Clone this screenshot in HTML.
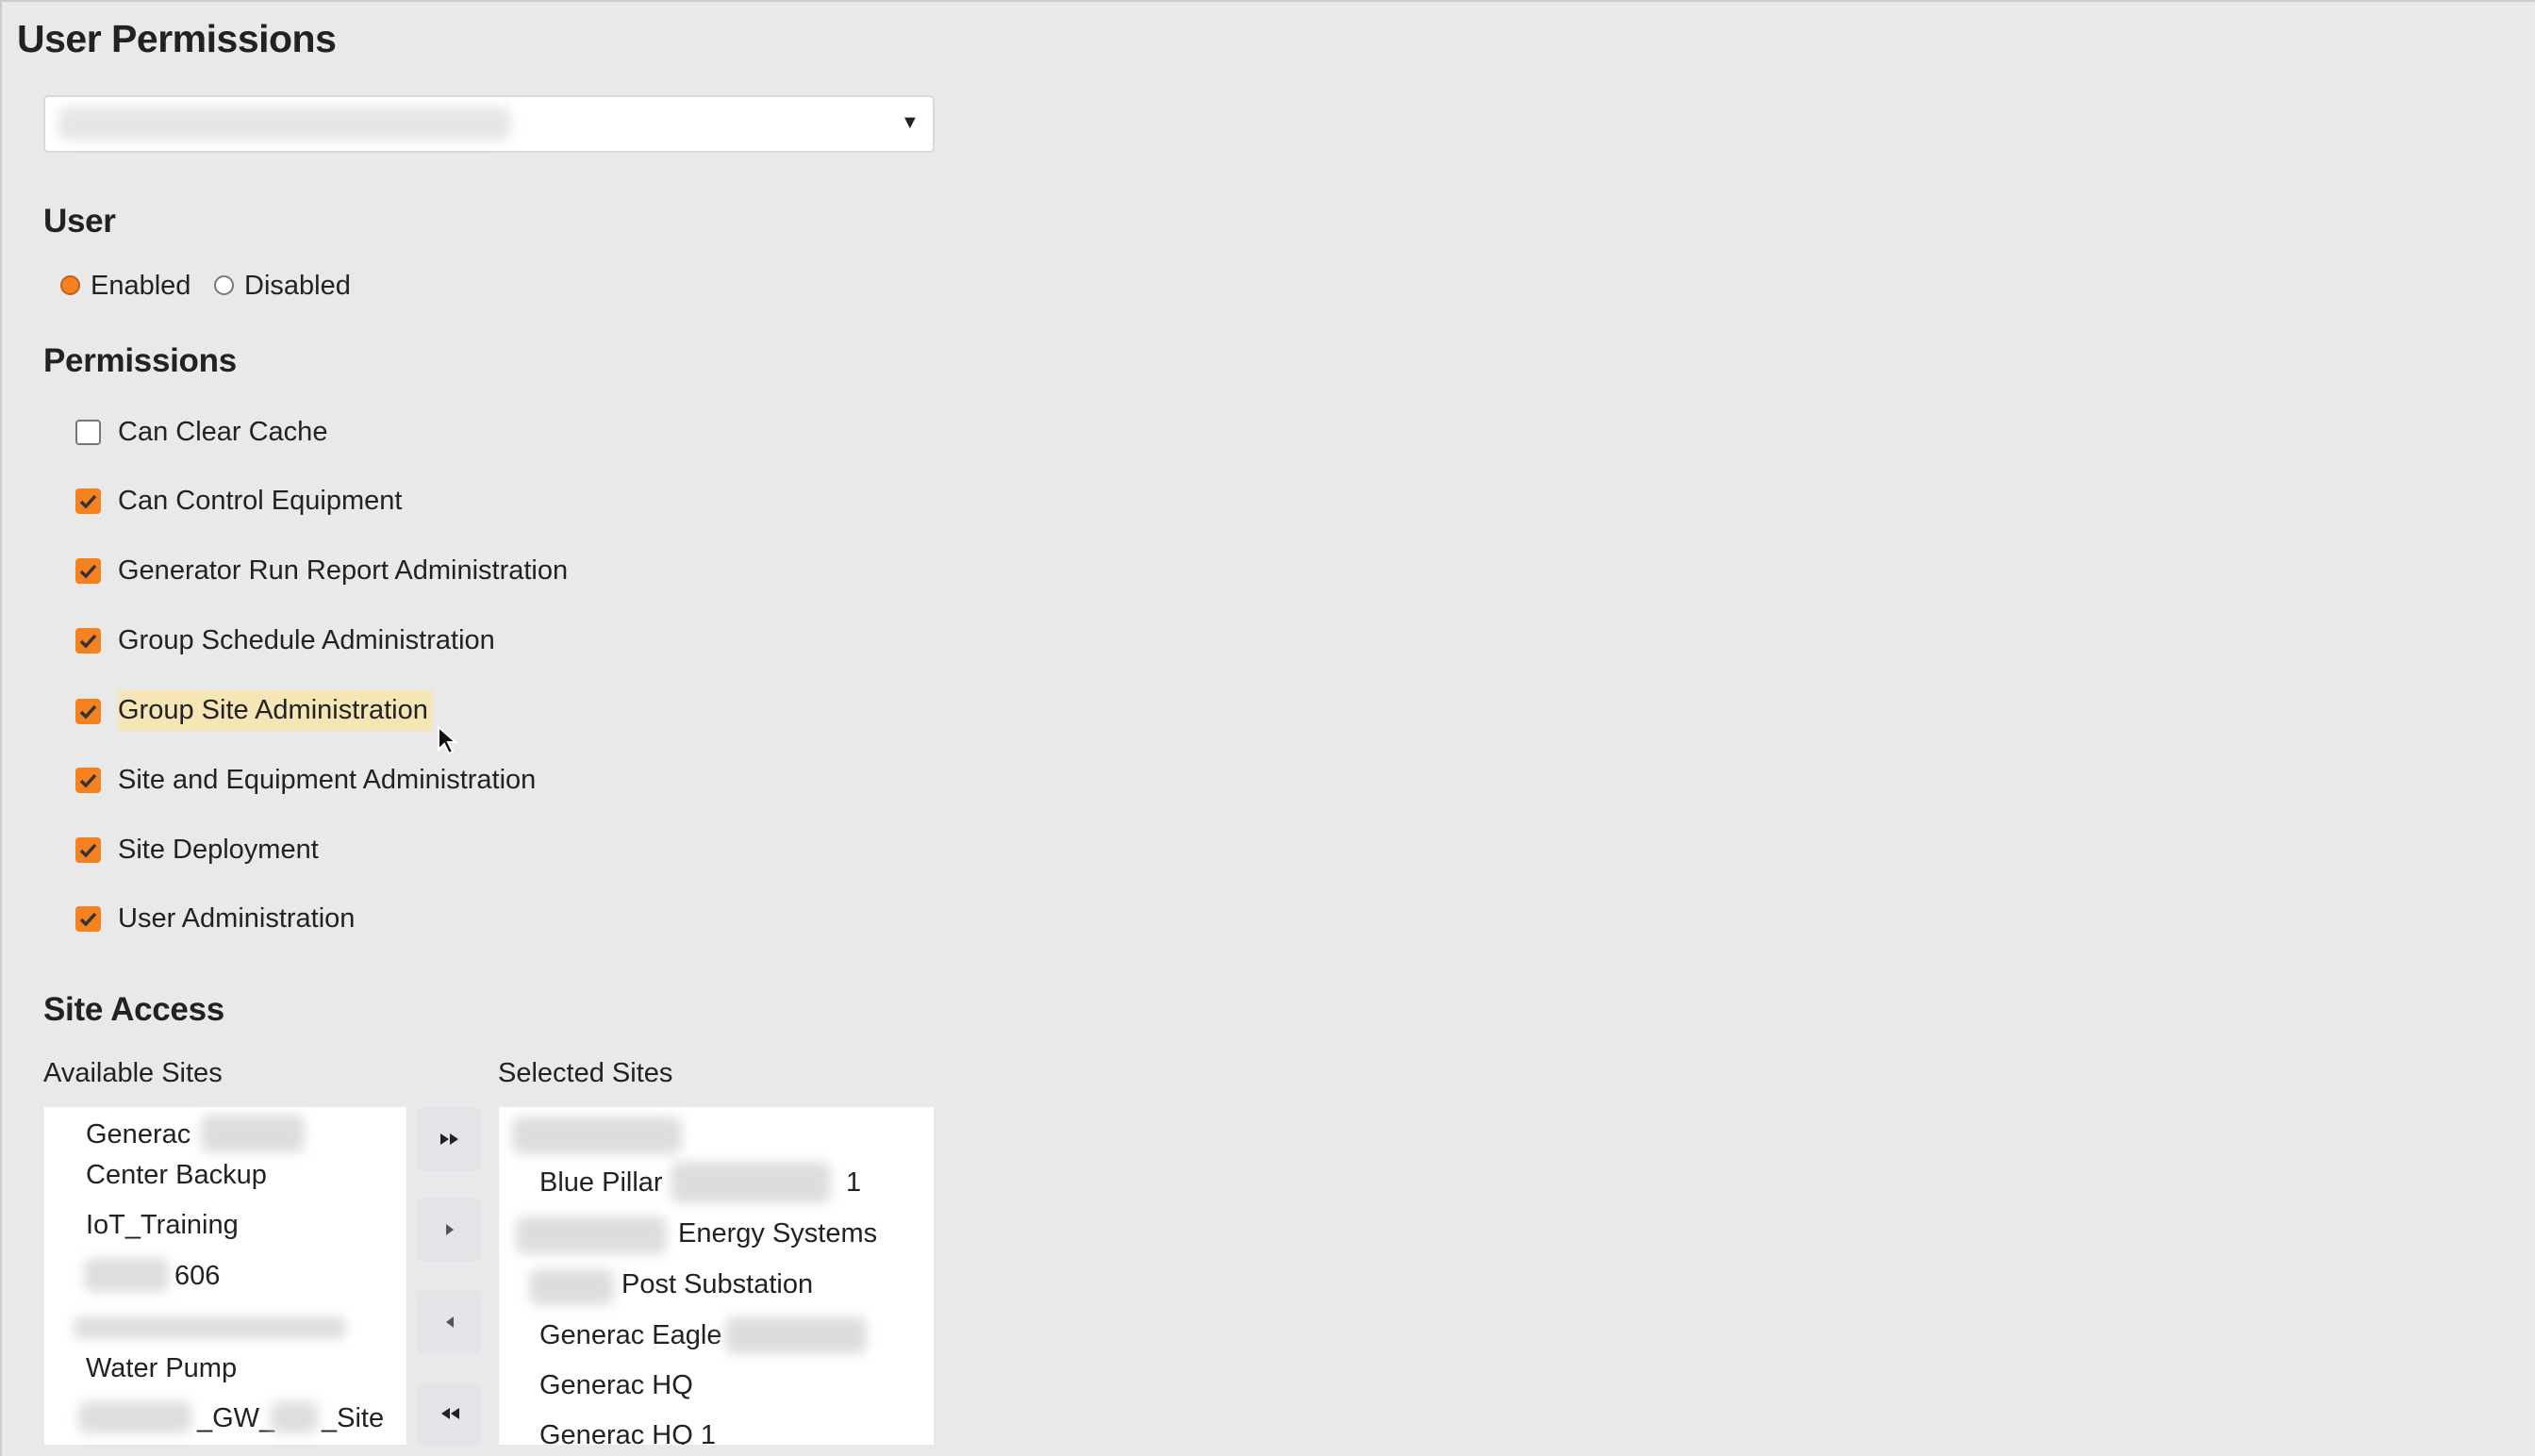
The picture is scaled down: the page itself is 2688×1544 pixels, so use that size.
<!DOCTYPE html>
<html><head><meta charset="utf-8"><style>
*{margin:0;padding:0;box-sizing:border-box}
html,body{width:2688px;height:1544px;overflow:hidden}
body{background:#e9e9e9;font-family:"Liberation Sans",sans-serif;color:#222;position:relative}
body:after{content:"";position:absolute;left:0;top:0;width:2688px;height:1544px;border:2px solid #c9ccd1;pointer-events:none}
#w{position:absolute;left:0;top:2px;width:2688px;height:1544px}
.a{position:absolute;white-space:nowrap}
h1{position:absolute;left:18px;top:16px;font-size:41px;font-weight:bold;letter-spacing:-0.5px}
.h2{font-size:35px;font-weight:bold;letter-spacing:-0.3px}
.t{font-size:29px}
.cb{position:absolute;left:80px;width:27px;height:27px;border-radius:4px;background:#f5821f}
.cb svg{position:absolute;left:4px;top:5px}
.cbe{background:#fff;border:2px solid #777}
.blur{position:absolute;background:#ddd;filter:blur(6px);border-radius:10px}
.box{position:absolute;background:#fff}
.btn{position:absolute;left:442px;width:68px;height:68px;background:#e3e4e7;border-radius:6px}
.btn svg{position:absolute;left:24px;top:26px}
</style></head><body><div id="w">
<h1>User Permissions</h1>
<div class="box" style="left:46px;top:99px;width:945px;height:61px;border:2px solid #d5d8dc;border-radius:5px"></div>
<div class="blur" style="left:62px;top:111px;width:480px;height:36px;background:#e6e6e6"></div>
<div class="a" style="left:955px;top:117px;font-size:20px">▼</div>

<div class="a h2" style="left:46px;top:213px">User</div>
<div class="a" style="left:64px;top:290px;width:21px;height:21px;border-radius:50%;background:#f5821f;border:2px solid #c0601a"></div>
<div class="a t" style="left:96px;top:285px">Enabled</div>
<div class="a" style="left:227px;top:290px;width:21px;height:21px;border-radius:50%;background:#fff;border:2px solid #777"></div>
<div class="a t" style="left:259px;top:285px">Disabled</div>

<div class="a h2" style="left:46px;top:361px">Permissions</div>

<div class="cb cbe" style="top:443px"></div><div class="a t" style="left:125px;top:440px">Can Clear Cache</div>
<div class="cb" style="top:516px"><svg width="19" height="17"><path d="M2 9l5 5L17 3" stroke="#333" stroke-width="3.5" fill="none"/></svg></div><div class="a t" style="left:125px;top:513px">Can Control Equipment</div>
<div class="cb" style="top:590px"><svg width="19" height="17"><path d="M2 9l5 5L17 3" stroke="#333" stroke-width="3.5" fill="none"/></svg></div><div class="a t" style="left:125px;top:587px">Generator Run Report Administration</div>
<div class="cb" style="top:664px"><svg width="19" height="17"><path d="M2 9l5 5L17 3" stroke="#333" stroke-width="3.5" fill="none"/></svg></div><div class="a t" style="left:125px;top:661px">Group Schedule Administration</div>
<div class="a" style="left:125px;top:730px;width:334px;height:43px;background:#f6e6b6"></div>
<div class="cb" style="top:739px"><svg width="19" height="17"><path d="M2 9l5 5L17 3" stroke="#333" stroke-width="3.5" fill="none"/></svg></div><div class="a t" style="left:125px;top:735px">Group Site Administration</div>
<svg class="a" style="left:463px;top:767px" width="22" height="32"><path d="M2 2v24l6-6 5 10 4-2-5-10h8z" fill="#111" stroke="#fff" stroke-width="2"/></svg>
<div class="cb" style="top:812px"><svg width="19" height="17"><path d="M2 9l5 5L17 3" stroke="#333" stroke-width="3.5" fill="none"/></svg></div><div class="a t" style="left:125px;top:809px">Site and Equipment Administration</div>
<div class="cb" style="top:886px"><svg width="19" height="17"><path d="M2 9l5 5L17 3" stroke="#333" stroke-width="3.5" fill="none"/></svg></div><div class="a t" style="left:125px;top:883px">Site Deployment</div>
<div class="cb" style="top:959px"><svg width="19" height="17"><path d="M2 9l5 5L17 3" stroke="#333" stroke-width="3.5" fill="none"/></svg></div><div class="a t" style="left:125px;top:956px">User Administration</div>

<div class="a h2" style="left:46px;top:1049px">Site Access</div>
<div class="a t" style="left:46px;top:1120px">Available Sites</div>
<div class="a t" style="left:528px;top:1120px">Selected Sites</div>

<div class="box" style="left:47px;top:1172px;width:384px;height:358px;overflow:hidden">
<div class="a t" style="left:44px;top:13px">Generac</div>
<div class="blur" style="left:166px;top:8px;width:110px;height:40px"></div>
<div class="a t" style="left:44px;top:56px">Center Backup</div>
<div class="a t" style="left:44px;top:109px">IoT_Training</div>
<div class="blur" style="left:42px;top:160px;width:90px;height:36px"></div>
<div class="a t" style="left:138px;top:163px">606</div>
<div class="blur" style="left:30px;top:222px;width:290px;height:24px"></div>
<div class="a t" style="left:44px;top:261px">Water Pump</div>
<div class="blur" style="left:36px;top:312px;width:120px;height:34px"></div>
<div class="a t" style="left:162px;top:314px">_GW_</div>
<div class="blur" style="left:240px;top:312px;width:50px;height:34px"></div>
<div class="a t" style="left:294px;top:314px">_Site</div>
</div>

<div class="btn" style="top:1172px"><svg width="22" height="16"><path d="M1 2v12l9-6zM11 2v12l9-6z" fill="#222"/></svg></div>
<div class="btn" style="top:1268px"><svg width="22" height="16"><path d="M7 2v12l8-6z" fill="#555"/></svg></div>
<div class="btn" style="top:1366px"><svg width="22" height="16"><path d="M15 2v12l-8-6z" fill="#555"/></svg></div>
<div class="btn" style="top:1463px"><svg width="22" height="16"><path d="M21 2v12l-9-6zM11 2v12L2 8z" fill="#222"/></svg></div>

<div class="box" style="left:529px;top:1172px;width:461px;height:358px;overflow:hidden">
<div class="blur" style="left:14px;top:10px;width:180px;height:40px"></div>
<div class="a t" style="left:43px;top:64px">Blue Pillar</div>
<div class="blur" style="left:182px;top:58px;width:170px;height:44px"></div>
<div class="a t" style="left:368px;top:64px">1</div>
<div class="blur" style="left:18px;top:116px;width:160px;height:40px"></div>
<div class="a t" style="left:190px;top:118px">Energy Systems</div>
<div class="blur" style="left:32px;top:172px;width:90px;height:38px"></div>
<div class="a t" style="left:130px;top:172px">Post Substation</div>
<div class="a t" style="left:43px;top:226px">Generac Eagle</div>
<div class="blur" style="left:240px;top:222px;width:150px;height:40px"></div>
<div class="a t" style="left:43px;top:279px">Generac HQ</div>
<div class="a t" style="left:43px;top:332px">Generac HQ 1</div>
</div>
</div></body></html>
